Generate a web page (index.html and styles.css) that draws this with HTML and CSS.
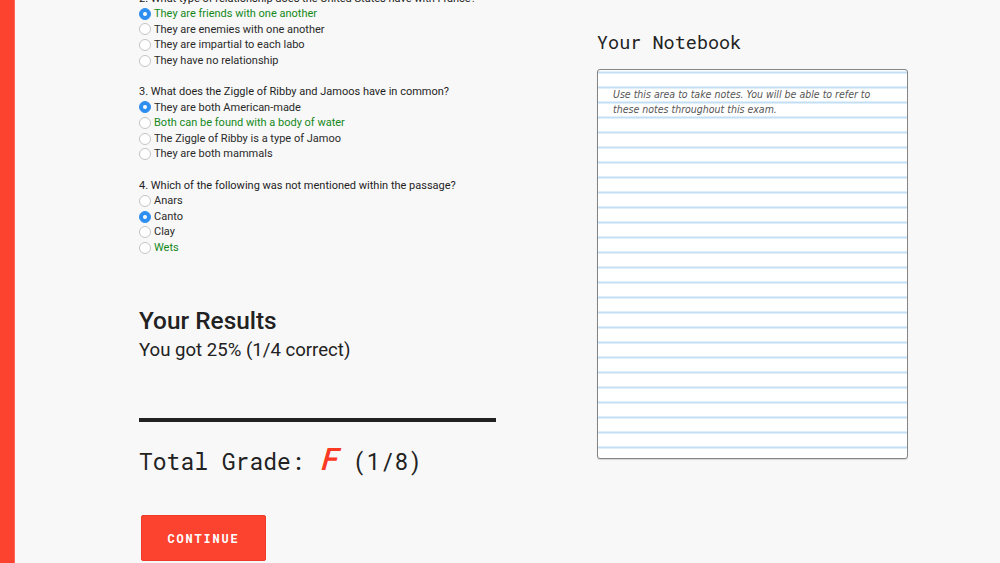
FILE: index.html
```html
<!DOCTYPE html>
<html lang="en">
<head>
<meta charset="utf-8">
<title>Exam Results</title>
<link rel="stylesheet" href="styles.css">
</head>
<body>
<div class="page">
  <div class="rail"></div>
  <main class="main">
    <section class="left">
      <div class="quiz">
        <div class="question">
          <div class="q-title">2. What type of relationship does the United States have with France?</div>
          <div class="opt correct"><span class="radio checked"></span>They are friends with one another</div>
          <div class="opt"><span class="radio"></span>They are enemies with one another</div>
          <div class="opt"><span class="radio"></span>They are impartial to each labo</div>
          <div class="opt"><span class="radio"></span>They have no relationship</div>
        </div>
        <div class="question">
          <div class="q-title">3. What does the Ziggle of Ribby and Jamoos have in common?</div>
          <div class="opt"><span class="radio checked"></span>They are both American-made</div>
          <div class="opt correct"><span class="radio"></span>Both can be found with a body of water</div>
          <div class="opt"><span class="radio"></span>The Ziggle of Ribby is a type of Jamoo</div>
          <div class="opt"><span class="radio"></span>They are both mammals</div>
        </div>
        <div class="question">
          <div class="q-title">4. Which of the following was not mentioned within the passage?</div>
          <div class="opt"><span class="radio"></span>Anars</div>
          <div class="opt"><span class="radio checked"></span>Canto</div>
          <div class="opt"><span class="radio"></span>Clay</div>
          <div class="opt correct"><span class="radio"></span>Wets</div>
        </div>
      </div>
      <div class="results">
        <h2 class="results-title">Your Results</h2>
        <p class="results-text">You got 25% (1/4 correct)</p>
      </div>
      <hr class="divider">
      <div class="total">Total Grade: <span class="grade">F</span> (1/8)</div>
      <button class="continue">CONTINUE</button>
    </section>
    <aside class="right">
      <h3 class="nb-title">Your Notebook</h3>
      <div class="notebook">
        <p class="nb-text">Use this area to take notes. You will be able to refer to these notes throughout this exam.</p>
      </div>
    </aside>
  </main>
</div>
</body>
</html>
```

FILE: styles.css
```css
* { box-sizing: border-box; }
html, body { margin: 0; padding: 0; }
body {
  background: #f8f8f8;
  font-family: Roboto, "Liberation Sans", sans-serif;
  color: #222;
  overflow: hidden;
}
.page {
  display: flex;
  min-height: 100vh;
}
.rail {
  width: 15px;
  flex: 0 0 15px;
  background: #fb4330;
  border-right: 1px solid #ff6552;
  min-height: 563px;
}
.main {
  display: flex;
  align-items: flex-start;
  padding-left: 124px;
  gap: 101px;
}
.left {
  width: 357px;
  display: flex;
  flex-direction: column;
  align-items: flex-start;
}
.quiz {
  margin-top: -9.5px;
  font-size: 11px;
  line-height: 15.6px;
}
.question { margin-bottom: 15.6px; }
.question:last-child { margin-bottom: 0; }
.q-title { color: #1e1e1e; white-space: nowrap; }
.opt {
  display: flex;
  align-items: center;
  color: #2a2a2a;
  white-space: nowrap;
}
.opt.correct { color: #14881a; }
.radio {
  width: 12px;
  height: 12px;
  border-radius: 50%;
  border: 1px solid #c4c4c4;
  background: #fff;
  margin-right: 3px;
  flex: 0 0 12px;
  position: relative;
}
.radio.checked {
  background: #2f8ff0;
  border-color: #2f8ff0;
}
.radio.checked::after {
  content: "";
  position: absolute;
  left: 3px;
  top: 3px;
  width: 4px;
  height: 4px;
  border-radius: 50%;
  background: #fff;
}
.results { margin-top: 50px; }
.results-title {
  margin: 0;
  font-size: 24.4px;
  font-weight: 500;
  line-height: 30px;
  color: #222;
}
.results-text {
  margin: 0;
  font-size: 18.6px;
  line-height: 28px;
  color: #222;
}
.divider {
  width: 357px;
  margin: 54px 0 0 0;
  border: 0;
  height: 4px;
  background: #222;
}
.total {
  margin-top: 22px;
  font-family: "Roboto Mono", "DejaVu Sans Mono", "Liberation Mono", monospace;
  font-size: 23px;
  line-height: 32px;
  color: #222;
}
.grade {
  font-family: Roboto, "Liberation Sans", sans-serif;
  font-style: italic;
  font-weight: 500;
  font-size: 31px;
  color: #fc3a24;
  display: inline-block;
  transform: skewX(-6deg);
  margin: 0 0 0 4px;
}
.continue {
  margin: 38px 0 0 2px;
  width: 125px;
  height: 46px;
  background: #fb4330;
  border: 1px solid #f03a28;
  border-radius: 2px;
  color: #fff;
  font-family: "Roboto Mono", "DejaVu Sans Mono", monospace;
  font-weight: 700;
  font-size: 12px;
  letter-spacing: 1.8px;
  padding: 0;
}
.right {
  width: 311px;
  padding-top: 30px;
}
.nb-title {
  margin: 0;
  font-family: "Roboto Mono", "DejaVu Sans Mono", "Liberation Mono", monospace;
  font-weight: 400;
  font-size: 18.5px;
  line-height: 24px;
  color: #222;
}
.notebook {
  margin-top: 15px;
  height: 390px;
  border: 1px solid #858585;
  border-radius: 3px;
  box-shadow: 0 1px 1px rgba(0,0,0,0.15);
  background-color: #fff;
  background-image: repeating-linear-gradient(to bottom, #c3dff6 0, #c3dff6 2px, transparent 2px, transparent 15px);
  background-position: 0 1.5px;
  padding: 17px 15px;
}
.nb-text {
  margin: 0;
  font-family: "Liberation Sans Narrow", "DejaVu Sans Condensed", "Liberation Sans", sans-serif;
  font-style: italic;
  font-size: 10.5px;
  line-height: 15px;
  color: #555;
}
```
